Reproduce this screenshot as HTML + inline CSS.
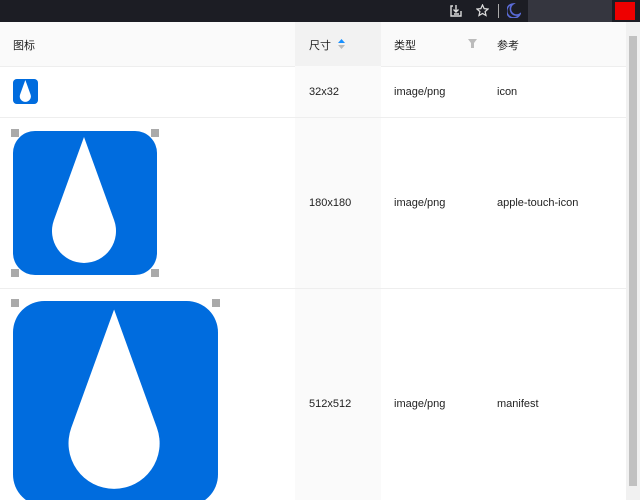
<!DOCTYPE html><html><head><style>
html,body{margin:0;width:640px;height:500px;overflow:hidden}
body{background:#fff;font-family:"Liberation Sans","Noto Sans CJK SC",sans-serif;font-size:11px;color:#222;position:relative}
.top{position:absolute;left:0;top:0;width:640px;height:22px;background:#1c1d24}
.top .r{position:absolute;left:528px;top:0;width:84px;height:22px;background:#35363f}
.top .red{position:absolute;left:615px;top:2px;width:20px;height:18px;background:#e00}
.a{position:absolute}
.hdr{position:absolute;left:0;top:22px;width:626px;height:44px;background:#fafafa;border-bottom:1px solid #eee}
.sortcol{position:absolute;left:295px;top:22px;width:86px;height:478px;background:#fafafa}
.sorthd{position:absolute;left:295px;top:22px;width:86px;height:44px;background:#f2f2f2}
.line{position:absolute;left:0;width:626px;height:1px;background:#eee}
.sb{position:absolute;left:626px;top:22px;width:14px;height:478px;background:#f1f1f1}
.sb i{position:absolute;left:3px;top:14px;width:8px;height:450px;background:#c1c1c1}
</style></head><body>
<div class="top"><div class="r"></div><div class="red"></div>
<svg class="a" style="left:449px;top:4px" width="14" height="14" viewBox="0 0 14 14" fill="none" stroke="#ddd" stroke-width="1.4"><path d="M4 2H2v10h10V7M7 1v7M4.5 5.5 7 8l2.5-2.5M5 10h5"/></svg>
<svg class="a" style="left:476px;top:4px" width="13" height="13" viewBox="0 0 14 14" fill="none" stroke="#ddd" stroke-width="1.3"><path d="M7 1l1.8 4 4.2.4-3.2 2.8 1 4.2L7 10.2 3.2 12.4l1-4.2L1 5.4l4.2-.4z"/></svg>
<div class="a" style="left:498px;top:4px;width:1px;height:14px;background:#aaa"></div>
<svg class="a" style="left:507px;top:3px" width="14" height="15" viewBox="0 0 14 15"><path d="M6 1a7 7 0 1 0 7 10A6 6 0 0 1 6 1z" fill="none" stroke="#5a6bd8" stroke-width="1.6"/></svg>
</div>
<div class="hdr"></div>
<div class="sortcol"></div><div class="sorthd"></div>
<div class="line" style="top:117px"></div><div class="line" style="top:288px"></div>
<div class="sb"><i></i></div>
<div class="a" style="left:13px;top:37px">图标</div>
<div class="a" style="left:309px;top:37px">尺寸</div>
<svg class="a" style="left:338px;top:39px" width="7" height="10"><path d="M0 4L3.5 0 7 4z" fill="#1890ff"/><path d="M0 6l3.5 4L7 6z" fill="#bbb"/></svg>
<div class="a" style="left:394px;top:37px">类型</div>
<svg class="a" style="left:468px;top:39px" width="9" height="9"><path d="M0 0h9L6 4v5H3V4z" fill="#bbb"/></svg>
<div class="a" style="left:497px;top:37px">参考</div>
<div class="a" style="left:309px;top:86px">32x32</div><div class="a" style="left:394px;top:86px">image/png</div><div class="a" style="left:497px;top:86px">icon</div>
<div class="a" style="left:309px;top:197px">180x180</div><div class="a" style="left:394px;top:197px">image/png</div><div class="a" style="left:497px;top:197px">apple-touch-icon</div>
<div class="a" style="left:309px;top:398px">512x512</div><div class="a" style="left:394px;top:398px">image/png</div><div class="a" style="left:497px;top:398px">manifest</div>
<svg class="a" style="left:13px;top:79px" width="25" height="25" viewBox="0 0 144 144"><rect width="144" height="144" rx="22" fill="#006cde"/><path d="M71 6L101.1 89.1A32 32 0 1 1 40.9 89.1Z" fill="#fff"/></svg>
<div class="a" style="left:11px;top:129px;width:148px;height:148px;background:#aaa"></div>
<div class="a" style="left:19px;top:129px;width:132px;height:148px;background:#fff"></div>
<div class="a" style="left:11px;top:137px;width:148px;height:132px;background:#fff"></div>
<svg class="a" style="left:13px;top:131px" width="144" height="144" viewBox="0 0 144 144"><rect width="144" height="144" rx="22" fill="#006cde"/><path d="M71 6L101.1 89.1A32 32 0 1 1 40.9 89.1Z" fill="#fff"/></svg>
<div class="a" style="left:11px;top:299px;width:209px;height:201px;background:#aaa"></div>
<div class="a" style="left:19px;top:299px;width:193px;height:201px;background:#fff"></div>
<div class="a" style="left:11px;top:307px;width:209px;height:193px;background:#fff"></div>
<svg class="a" style="left:13px;top:301px" width="205" height="199" viewBox="0 0 144 139.8"><rect width="144" height="144" rx="22" fill="#006cde"/><path d="M71 6L101.1 89.1A32 32 0 1 1 40.9 89.1Z" fill="#fff"/></svg>
</body></html>
